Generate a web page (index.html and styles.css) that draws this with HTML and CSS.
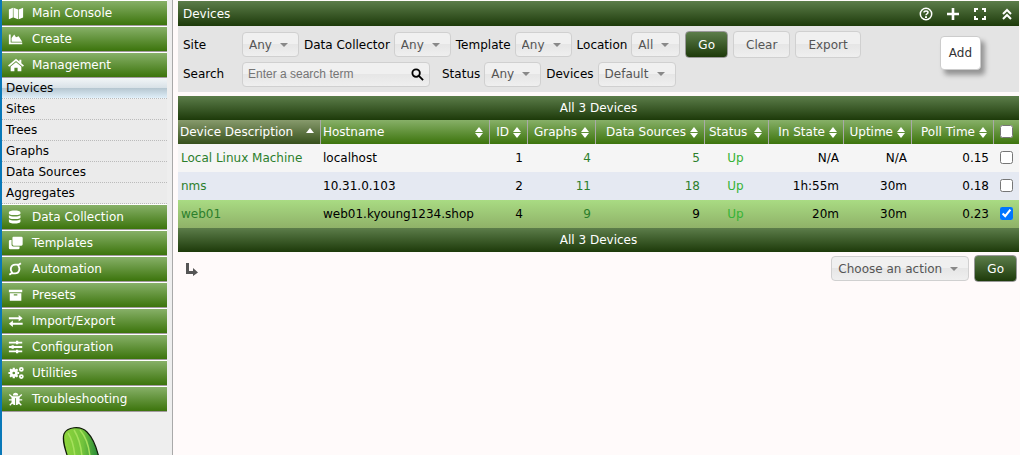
FILE: index.html
```html
<!DOCTYPE html>
<html lang="en">
<head>
  <meta charset="utf-8">
  <title>Console -> Devices</title>
  <link rel="stylesheet" href="styles.css">
</head>
<body>
  <nav id="navigation">
    <ul class="menu">
      <li><a class="menu-head" href="#"><svg class="icon" viewBox="0 0 18 16"><path d="M1 4l4.500-2v11L1 15zM6.200 2l5.200 2v11l-5.200-2zM12.100 4L17 2v11l-4.900 2z"/></svg>Main Console</a></li>
      <li><a class="menu-head" href="#"><svg class="icon" viewBox="0 0 18 16"><path d="M1 3h2v9h13v2H1zM4 11V7l3-4 2 3 3-1 4 6z"/></svg>Create</a></li>
      <li>
        <a class="menu-head" href="#"><svg class="icon" viewBox="0 0 18 16"><path d="M9 1L0 8.500l1.300 1.500L9 3.500l7.700 6.500L18 8.500l-3-2.500V2h-2.200v2.200zM9 4.800l6 5V15h-4.200v-4H7.200v4H3V9.800z"/></svg>Management</a>
        <ul class="submenu">
          <li><a class="selected" href="#">Devices</a></li>
          <li><a href="#">Sites</a></li>
          <li><a href="#">Trees</a></li>
          <li><a href="#">Graphs</a></li>
          <li><a href="#">Data Sources</a></li>
          <li><a href="#">Aggregates</a></li>
        </ul>
      </li>
      <li><a class="menu-head" href="#"><svg class="icon" viewBox="0 0 18 16"><path d="M1 3c0-3 13-3 13 0v1c0 2.500-13 2.500-13 0zM1 6c2 2 11 2 13 0v2.500c0 2.500-13 2.500-13 0zM1 10.500c2 2 11 2 13 0V13c0 3-13 3-13 0z"/></svg>Data Collection</a></li>
      <li><a class="menu-head" href="#"><svg class="icon" viewBox="0 0 18 16"><path d="M6 1h9q1.500 0 1.500 1.500v7q0 1.500-1.500 1.500H6.500q-1.500 0-1.500-1.500v-7Q5 1 6 1zM1 6q0-1.500 1.500-1.500H4V10q0 2 2 2h7v1.500q0 1.500-1.500 1.500h-9Q1 15 1 13.500z"/></svg>Templates</a></li>
      <li><a class="menu-head" href="#"><svg class="icon" viewBox="0 0 18 16"><path class="line heavy" d="M1.500 14.500l2-1.500h4.500c5 0 6-6 3.500-8.500M14.500 1.500l-2 1.500H8c-5 0-6 6-3.500 8.500M12.500 3l-1.500 2M3.500 13L5 11"/></svg>Automation</a></li>
      <li><a class="menu-head" href="#"><svg class="icon" viewBox="0 0 18 16"><path fill-rule="evenodd" d="M1 2h15v3H1zM2 6h13v8.500H2zM6.500 7.200v1.300h4V7.200z"/></svg>Presets</a></li>
      <li><a class="menu-head" href="#"><svg class="icon" viewBox="0 0 18 16"><path d="M1 3.800h11V1.200L16.500 5 12 8.500V6H1zM16.500 10H5.500V7.500L1 11.200l4.500 3.500v-2.500h11z"/></svg>Import/Export</a></li>
      <li><a class="menu-head" href="#"><svg class="icon" viewBox="0 0 18 16"><path d="M1 2h8V1h2.500v1H16v2h-4.500v1H9V4H1zM1 7h3V6h2.500v1H16v2H6.500v1H4V9H1zM1 12h8v-1h2.500v1H16v2h-4.500v1H9v-1H1z"/></svg>Configuration</a></li>
      <li><a class="menu-head" href="#"><svg class="icon" viewBox="0 0 18 16"><circle class="gear" cx="6.500" cy="8" r="3"/><path class="teeth" d="M6.500 2v2m0 8v2M.5 8h2m8 0h2M2.300 3.800l1.400 1.400m5.600 5.600l1.400 1.400m0-8.400L9.300 5.200m-5.600 5.600l-1.400 1.400"/><circle class="gear-small" cx="15" cy="4" r="1.700"/><circle class="gear-small" cx="15" cy="12" r="1.700"/></svg>Utilities</a></li>
      <li><a class="menu-head" href="#"><svg class="icon" viewBox="0 0 18 16"><path d="M5.500 4a3 3 0 0 1 6 0zM4 5h9v6c0 5-9 5-9 0z"/><path class="line" d="M1.500 3L5 6M15.500 3L12 6M1 9h15M2 15l3-3M15 15l-3-3"/><path class="seam" d="M8.500 7v8"/></svg>Troubleshooting</a></li>
    </ul>
    <svg class="cactus" viewBox="0 0 50 30" width="50" height="30">
      <defs>
        <linearGradient id="skin" x1="0" y1="0" x2="1" y2="0">
          <stop offset="0" stop-color="#8fd53c"/>
          <stop offset=".55" stop-color="#72c33b"/>
          <stop offset="1" stop-color="#218638"/>
        </linearGradient>
      </defs>
      <path d="M8 32C5 23 2 14 4 8C7 1 20-1 27 6C33 12 37 23 39 32z" fill="url(#skin)" stroke="#101c08" stroke-width="1.200"/>
      <path d="M8 7c4 6 6 14 7 24M14 4c5 8 7 15 8 27M20 4c6 7 9 16 10 27" fill="none" stroke="#a5e05c" stroke-width="1.500"/>
    </svg>
  </nav>

  <main id="content">
    <header class="bar title-bar">
      <h1>Devices</h1>
      <div class="title-tools">
        <a href="#" aria-label="Help"><svg viewBox="0 0 14 14"><circle class="line" cx="7" cy="7" r="5.700"/><path class="line" d="M5 5.600C5 3.400 9 3.400 9 5.600c0 1.400-2 1.200-2 2.600"/><path d="M6 9.300h2v1.700H6z"/></svg></a>
        <a href="#" aria-label="Add"><svg viewBox="0 0 14 14"><path d="M5.700 1h2.600v4.700H13v2.600H8.300V13H5.700V8.300H1V5.700h4.700z"/></svg></a>
        <a href="#" aria-label="Full screen"><svg viewBox="0 0 14 14"><path d="M1 1h4v2H3v2H1zM9 1h4v4h-2V3H9zM1 9h2v2h2v2H1zM11 9h2v4H9v-2h2z"/></svg></a>
        <a href="#" aria-label="Collapse"><svg viewBox="0 0 14 14"><path class="line double" d="M3 7l4-4 4 4M3 12l4-4 4 4"/></svg></a>
      </div>
    </header>

    <form class="filter">
      <div class="filter-row">
        <label class="first" for="site">Site</label>
        <select id="site"><option>Any</option></select>
        <label for="collector">Data Collector</label>
        <select id="collector"><option>Any</option></select>
        <label for="template">Template</label>
        <select id="template"><option>Any</option></select>
        <label for="location">Location</label>
        <select id="location"><option>All</option></select>
        <div class="buttons">
          <button class="go" type="button">Go</button>
          <button type="button">Clear</button>
          <button type="button">Export</button>
        </div>
      </div>
      <div class="filter-row">
        <label class="first" for="search">Search</label>
        <div class="search">
          <input id="search" type="text" placeholder="Enter a search term">
          <svg viewBox="0 0 14 14"><circle cx="5.500" cy="5.500" r="4"/><path d="M8.500 8.500L13 13"/></svg>
        </div>
        <label for="status">Status</label>
        <select id="status"><option>Any</option></select>
        <label for="rows">Devices</label>
        <select id="rows"><option>Default</option></select>
      </div>
      <div class="tooltip" role="tooltip">Add</div>
    </form>

    <div class="bar nav-bar">All 3 Devices</div>
    <table class="devices">
      <colgroup>
        <col class="c-desc"><col><col class="c-id"><col class="c-graphs"><col class="c-sources">
        <col class="c-status"><col class="c-state"><col class="c-uptime"><col class="c-poll"><col class="c-check">
      </colgroup>
      <thead>
        <tr>
          <th class="sorted"><div>Device Description<i class="sort up"></i></div></th>
          <th><div>Hostname<i class="sort"></i></div></th>
          <th class="num"><div>ID<i class="sort"></i></div></th>
          <th class="num"><div>Graphs<i class="sort"></i></div></th>
          <th class="num"><div>Data Sources<i class="sort"></i></div></th>
          <th class="status"><div>Status<i class="sort"></i></div></th>
          <th class="num"><div>In State<i class="sort"></i></div></th>
          <th class="num"><div>Uptime<i class="sort"></i></div></th>
          <th class="num"><div>Poll Time<i class="sort"></i></div></th>
          <th class="check"><input type="checkbox" aria-label="Select all"></th>
        </tr>
      </thead>
      <tbody>
        <tr>
          <td><a href="#">Local Linux Machine</a></td>
          <td>localhost</td>
          <td class="num">1</td>
          <td class="num"><a href="#">4</a></td>
          <td class="num"><a href="#">5</a></td>
          <td class="up">Up</td>
          <td class="num">N/A</td>
          <td class="num">N/A</td>
          <td class="num">0.15</td>
          <td class="check"><input type="checkbox" aria-label="Local Linux Machine"></td>
        </tr>
        <tr>
          <td><a href="#">nms</a></td>
          <td>10.31.0.103</td>
          <td class="num">2</td>
          <td class="num"><a href="#">11</a></td>
          <td class="num"><a href="#">18</a></td>
          <td class="up">Up</td>
          <td class="num">1h:55m</td>
          <td class="num">30m</td>
          <td class="num">0.18</td>
          <td class="check"><input type="checkbox" aria-label="nms"></td>
        </tr>
        <tr class="selected">
          <td><a href="#">web01</a></td>
          <td>web01.kyoung1234.shop</td>
          <td class="num">4</td>
          <td class="num"><a href="#">9</a></td>
          <td class="num">9</td>
          <td class="up">Up</td>
          <td class="num">20m</td>
          <td class="num">30m</td>
          <td class="num">0.23</td>
          <td class="check"><input type="checkbox" aria-label="web01" checked></td>
        </tr>
      </tbody>
    </table>
    <div class="bar nav-bar">All 3 Devices</div>

    <form class="actions">
      <svg class="arrow" viewBox="0 0 14 14"><path d="M1 1h3v8h4V6l5 4.500L8 14v-2H1z"/></svg>
      <select aria-label="Choose an action"><option>Choose an action</option></select>
      <button class="go" type="button">Go</button>
    </form>
  </main>
</body>
</html>
```
FILE: styles.css
```css
* {
  box-sizing: border-box;
}
body {
  display: flex;
  margin: 0;
  min-height: 100vh;
  font-family: "DejaVu Sans", Verdana, sans-serif;
  font-size: 12px;
  line-height: 16px;
  color: #000;
  background: #fffafa;
}
a {
  color: #2c7f2c;
  text-decoration: none;
}
svg .line {
  fill: none;
  stroke: currentColor;
  stroke-width: 1.5;
}
svg .heavy,
svg .double {
  stroke-width: 2;
}

/* left menu */
#navigation {
  flex: none;
  width: 173px;
  height: 100vh;
  overflow: hidden;
  padding-right: 5px;
  background: #eee;
  border-left: 2px solid #0878b8;
  border-right: 1px solid #a9a9a9;
}
.menu,
.submenu {
  list-style: none;
  margin: 0;
  padding: 0;
}
.menu-head {
  display: flex;
  align-items: center;
  gap: 8px;
  height: 26px;
  padding-left: 6px;
  color: #fff;
  font-size: 12px;
  background: linear-gradient(#87b068, #3c740c);
  background-clip: padding-box;
  border-top: 1px solid #fff;
  border-bottom: 1px solid #a39ba0;
}
.icon {
  width: 16px;
  height: 16px;
  fill: currentColor;
}
.icon .gear,
.icon .gear-small {
  fill: none;
  stroke: currentColor;
  stroke-width: 3;
}
.icon .gear-small {
  stroke-width: 2;
}
.icon .teeth {
  stroke: currentColor;
  stroke-width: 2.5;
}
.icon .seam {
  stroke: #5d8f38;
}
.submenu a {
  display: block;
  height: 21px;
  padding: 2px 4px;
  color: #000;
  background: #ebebeb;
  border-bottom: 1px dotted #bbb;
}
.submenu a.selected {
  background: linear-gradient(#f2f6f8 0%, #d8e1e7 50%, #b5c6d0 51%, #e0eff9 100%);
}
.cactus {
  display: block;
  margin: 14px 0 0 58px;
}

/* page */
#content {
  flex: 1;
  min-width: 0;
  padding: 1px 1px 0 5px;
}
.bar {
  color: #fff;
  background: linear-gradient(#5c7d4a, #1d3a0a);
}
.title-bar {
  display: flex;
  align-items: center;
  justify-content: space-between;
  height: 25px;
  padding: 0 5px;
}
.title-bar h1 {
  margin: 0;
  font-size: 12px;
  font-weight: normal;
}
.title-tools {
  display: flex;
  gap: 13px;
}
.title-tools a {
  color: #fff;
}
.title-tools svg {
  display: block;
  width: 14px;
  height: 14px;
  fill: currentColor;
}
.filter {
  position: relative;
  display: flex;
  flex-direction: column;
  gap: 3px;
  height: 66px;
  padding: 5px;
  margin-bottom: 4px;
  background: #e4e4e4;
}
.filter-row {
  display: flex;
  align-items: center;
  height: 27px;
}
.filter-row label {
  margin: 0 4px 0 5px;
}
.filter-row label.first {
  width: 59px;
  margin: 0;
}
select,
button,
.search {
  font-family: inherit;
  font-size: 12px;
  color: #555;
  background: linear-gradient(#f0f0f0 50%, #e6e6e6 50%, #efefef);
  border: 1px solid #d0d0d0;
  border-radius: 4px;
}
select {
  appearance: none;
  height: 25px;
  padding: 0 26px 0 6px;
  background:
    url("data:image/svg+xml,%3Csvg xmlns='http://www.w3.org/2000/svg' width='8' height='4'%3E%3Cpath d='M0 0h8L4 4z' fill='%23888'/%3E%3C/svg%3E") no-repeat right 10px center,
    linear-gradient(#f0f0f0 50%, #e6e6e6 50%, #efefef);
}
button {
  height: 27px;
  padding: 0 12px;
}
button.go {
  color: #fff;
  background: linear-gradient(#5c7d4a, #1d3a0a);
  border-color: #999;
}
.buttons {
  display: flex;
  gap: 5px;
  margin-left: 5px;
}
.search {
  display: flex;
  align-items: center;
  width: 188px;
  height: 25px;
  padding: 0 5px;
  margin-right: 7px;
}
.search input {
  flex: 1;
  min-width: 0;
  padding: 0;
  font-family: "Liberation Sans", Arial, sans-serif;
  font-size: 12px;
  background: none;
  border: none;
}
.search svg {
  width: 13px;
  height: 13px;
  fill: none;
  stroke: #000;
  stroke-width: 2;
}
.tooltip {
  position: absolute;
  top: 10px;
  right: 38px;
  padding: 8px;
  color: #333;
  background: #fff;
  border: 1px solid #ccc;
  border-radius: 4px;
  box-shadow: 4px 5px 5px rgba(0, 0, 0, 0.35);
}

/* device list */
.nav-bar {
  height: 24px;
  line-height: 24px;
  text-align: center;
}
.devices {
  width: 100%;
  table-layout: fixed;
  border-collapse: collapse;
}
.c-desc { width: 142px; }
.c-id { width: 38px; }
.c-graphs { width: 68px; }
.c-sources { width: 109px; }
.c-status { width: 64px; }
.c-state { width: 75px; }
.c-uptime { width: 68px; }
.c-poll { width: 82px; }
.c-check { width: 26px; }
.devices th {
  height: 24px;
  padding: 0 6px 0 3px;
  font-weight: normal;
  text-align: left;
  color: #fff;
  white-space: nowrap;
  background: linear-gradient(#87b068, #3c740c);
  box-shadow: inset 1px 0 #a9a9a9;
}
.devices th.sorted {
  padding-left: 2px;
  background: linear-gradient(#879a6c, #36501c);
  box-shadow: none;
}
.devices th.status {
  padding-left: 5px;
}
.devices th div {
  display: flex;
  align-items: center;
  justify-content: space-between;
}
.devices th.num div {
  justify-content: flex-end;
  gap: 4px;
}
.sort::before,
.sort::after {
  content: "";
  display: block;
  border: 4px solid transparent;
}
.sort::before {
  border-top: none;
  border-bottom: 5px solid #fff;
  margin-bottom: 1px;
}
.sort::after {
  border-bottom: none;
  border-top: 5px solid #fff;
}
.sort.up {
  padding-bottom: 3px;
}
.sort.up::after {
  display: none;
}
.devices td {
  height: 28px;
  padding: 0 4px 0 3px;
  white-space: nowrap;
}
.devices tbody tr {
  background: #f5f5f5;
}
.devices tbody tr:nth-child(even) {
  background: #e5e9f2;
}
.devices tbody tr.selected {
  background: linear-gradient(#a9db83, #8fb168);
}
.devices td.num {
  text-align: right;
}
.devices td.up {
  color: #36b336;
  text-align: center;
}
.devices .check {
  padding: 0 0 2px;
  text-align: center;
}
.check input {
  display: block;
  width: 13px;
  height: 13px;
  margin: 0 auto;
}
.actions {
  display: flex;
  align-items: center;
  gap: 5px;
  padding: 3px 2px 0 7px;
}
.actions .arrow {
  width: 14px;
  height: 14px;
  margin-right: auto;
  fill: #555;
}
```
